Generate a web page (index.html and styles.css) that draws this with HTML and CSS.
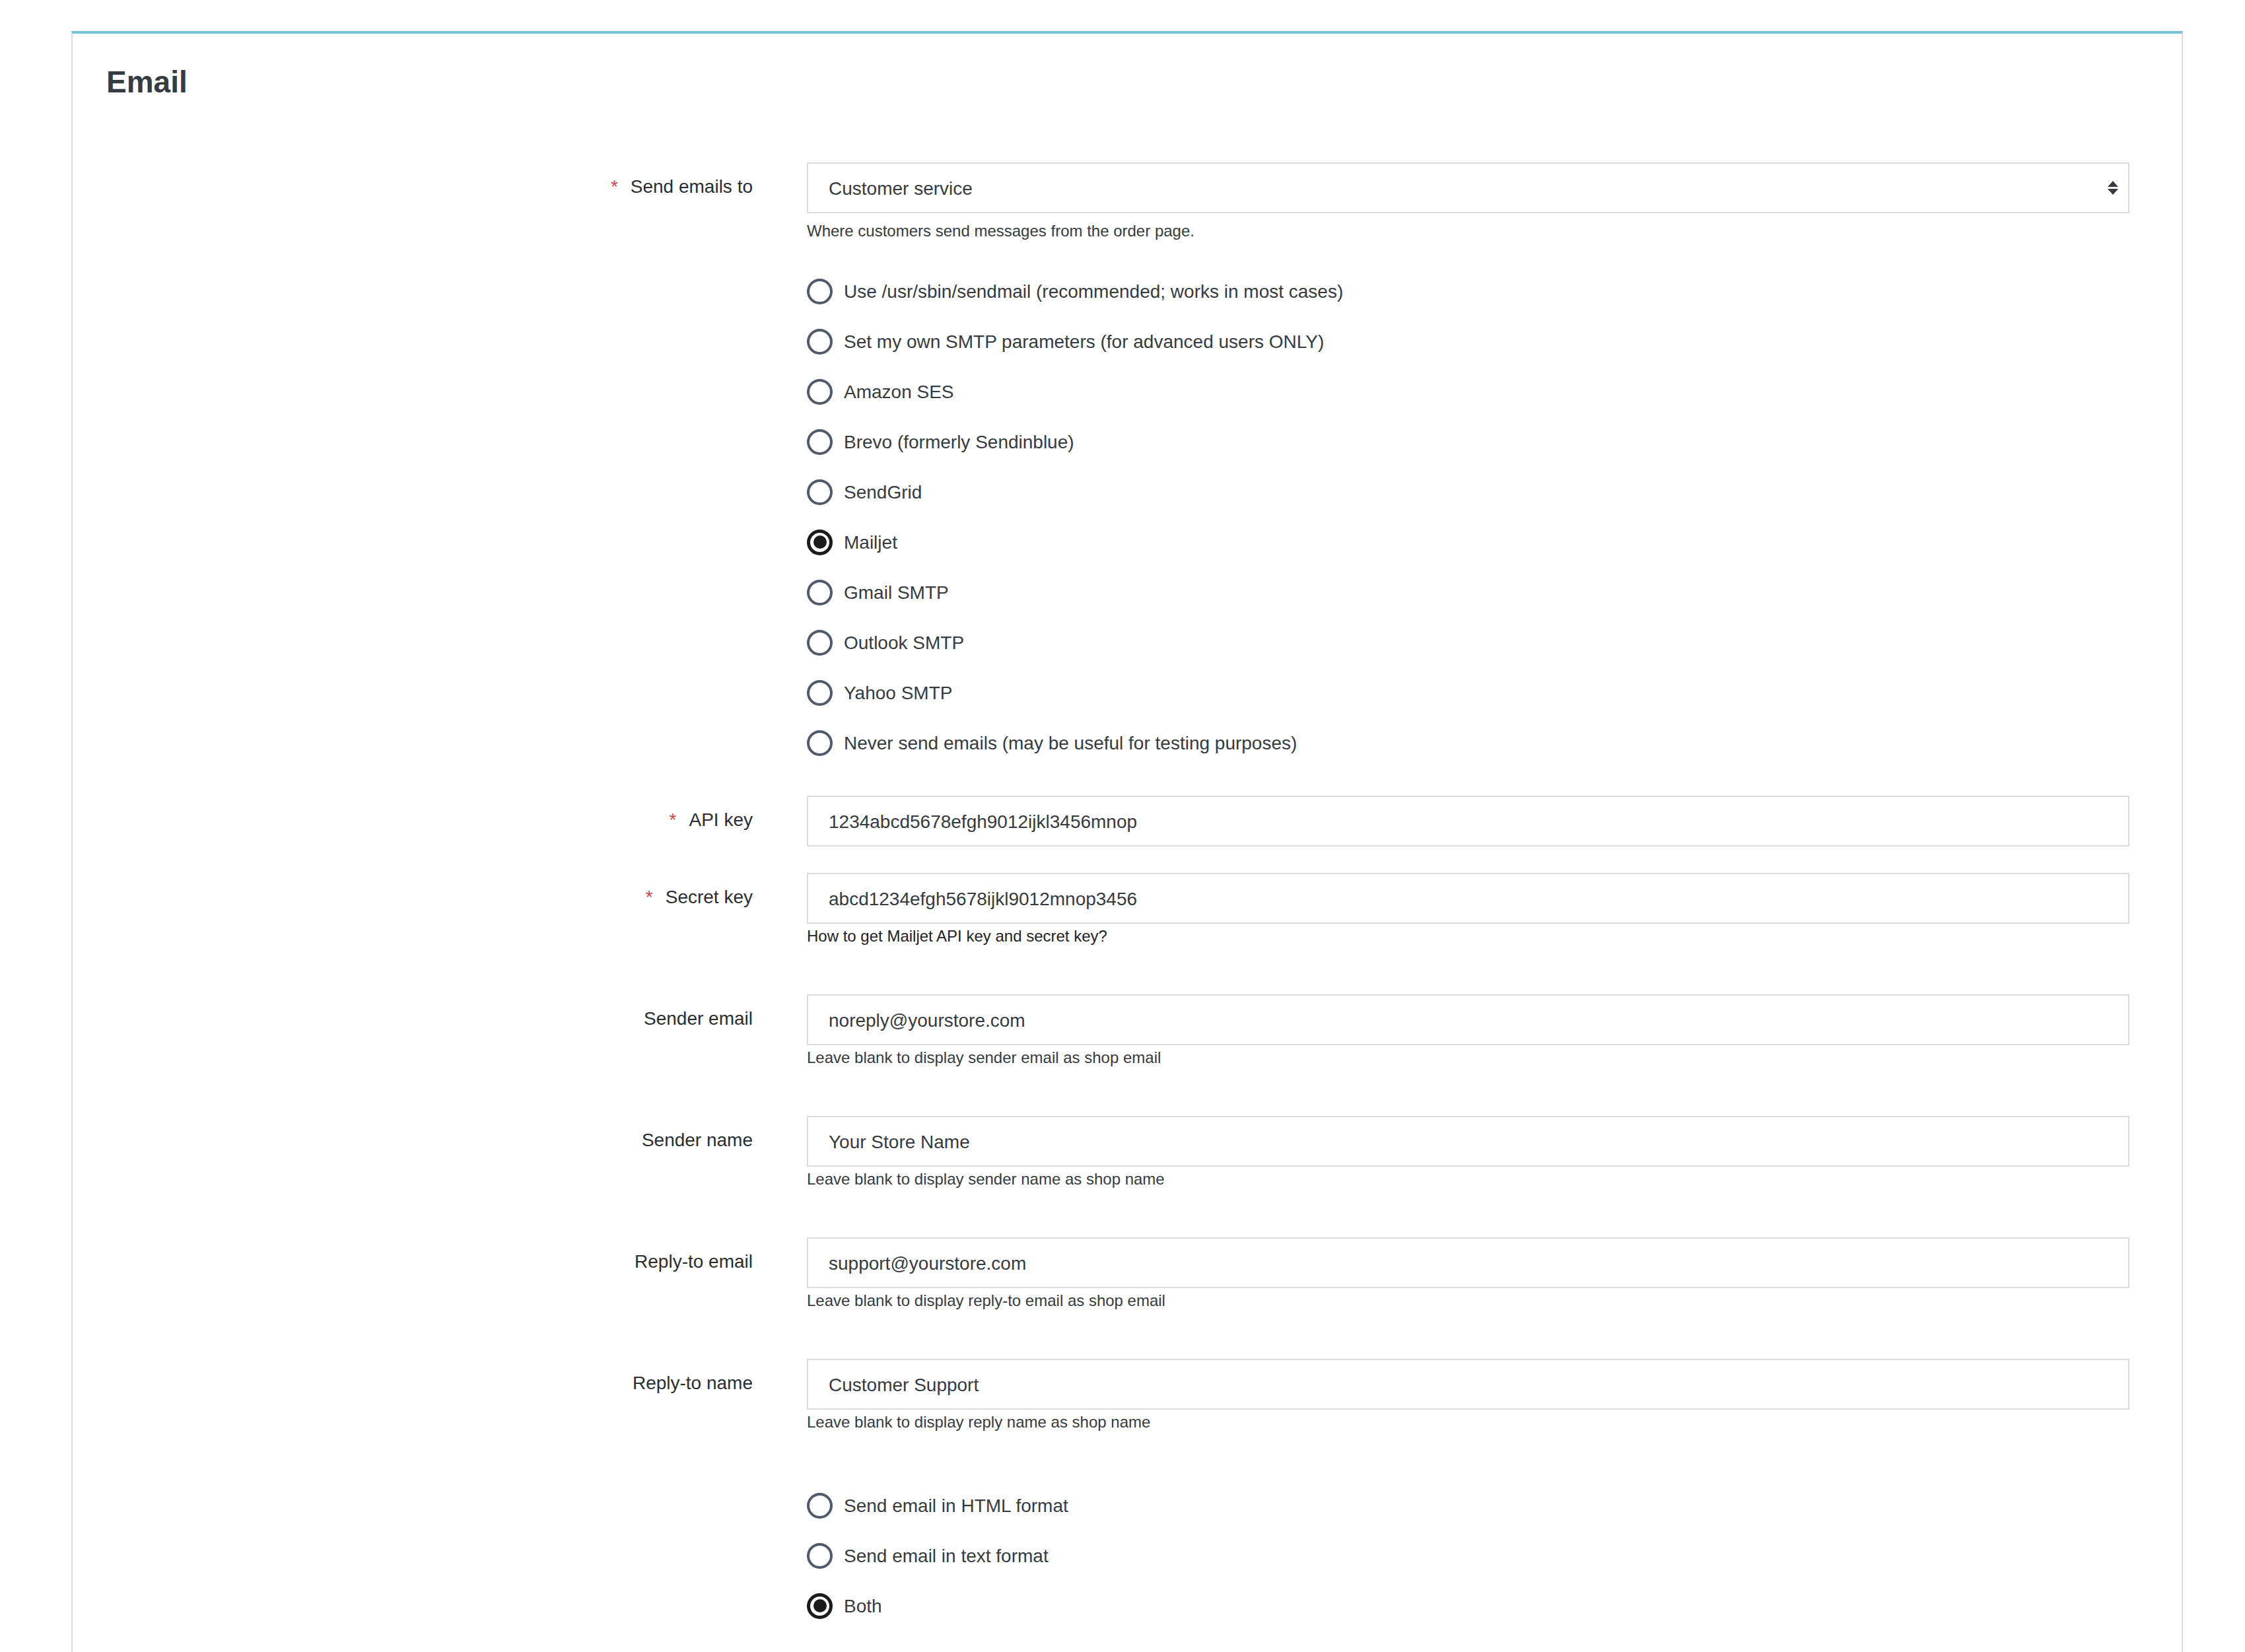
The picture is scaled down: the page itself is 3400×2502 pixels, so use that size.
FILE: index.html
```html
<!DOCTYPE html>
<html lang="en">
<head>
<meta charset="utf-8">
<title>Email</title>
<link rel="stylesheet" href="styles.css">
</head>
<body>
<div class="card">
  <h2 class="card-title">Email</h2>

  <div class="form-row row-select">
    <label class="row-label"><span class="required">*</span>Send emails to</label>
    <div class="row-control">
      <div class="select">
        <span class="select-value">Customer service</span>
        <svg class="select-arrow" width="16" height="22" viewBox="0 0 16 22"><polygon points="8,0 16,9 0,9"/><polygon points="0,12 16,12 8,21"/></svg>
      </div>
      <p class="help help-select">Where customers send messages from the order page.</p>
    </div>
  </div>

  <div class="form-row row-radios">
    <div class="row-label"></div>
    <div class="row-control">
      <div class="radio-item"><span class="radio"></span><span class="radio-text">Use /usr/sbin/sendmail (recommended; works in most cases)</span></div>
      <div class="radio-item"><span class="radio"></span><span class="radio-text">Set my own SMTP parameters (for advanced users ONLY)</span></div>
      <div class="radio-item"><span class="radio"></span><span class="radio-text">Amazon SES</span></div>
      <div class="radio-item"><span class="radio"></span><span class="radio-text">Brevo (formerly Sendinblue)</span></div>
      <div class="radio-item"><span class="radio"></span><span class="radio-text">SendGrid</span></div>
      <div class="radio-item"><span class="radio checked"></span><span class="radio-text">Mailjet</span></div>
      <div class="radio-item"><span class="radio"></span><span class="radio-text">Gmail SMTP</span></div>
      <div class="radio-item"><span class="radio"></span><span class="radio-text">Outlook SMTP</span></div>
      <div class="radio-item"><span class="radio"></span><span class="radio-text">Yahoo SMTP</span></div>
      <div class="radio-item"><span class="radio"></span><span class="radio-text">Never send emails (may be useful for testing purposes)</span></div>
    </div>
  </div>

  <div class="form-row">
    <label class="row-label"><span class="required">*</span>API key</label>
    <div class="row-control">
      <input class="text-input" type="text" value="1234abcd5678efgh9012ijkl3456mnop" readonly>
    </div>
  </div>

  <div class="form-row">
    <label class="row-label"><span class="required">*</span>Secret key</label>
    <div class="row-control">
      <input class="text-input" type="text" value="abcd1234efgh5678ijkl9012mnop3456" readonly>
      <p class="help help-dark">How to get Mailjet API key and secret key?</p>
    </div>
  </div>

  <div class="form-row">
    <label class="row-label">Sender email</label>
    <div class="row-control">
      <input class="text-input" type="text" value="noreply@yourstore.com" readonly>
      <p class="help">Leave blank to display sender email as shop email</p>
    </div>
  </div>

  <div class="form-row">
    <label class="row-label">Sender name</label>
    <div class="row-control">
      <input class="text-input" type="text" value="Your Store Name" readonly>
      <p class="help">Leave blank to display sender name as shop name</p>
    </div>
  </div>

  <div class="form-row">
    <label class="row-label">Reply-to email</label>
    <div class="row-control">
      <input class="text-input" type="text" value="support@yourstore.com" readonly>
      <p class="help">Leave blank to display reply-to email as shop email</p>
    </div>
  </div>

  <div class="form-row">
    <label class="row-label">Reply-to name</label>
    <div class="row-control">
      <input class="text-input" type="text" value="Customer Support" readonly>
      <p class="help">Leave blank to display reply name as shop name</p>
    </div>
  </div>

  <div class="form-row row-last">
    <div class="row-label"></div>
    <div class="row-control">
      <div class="radio-item"><span class="radio"></span><span class="radio-text">Send email in HTML format</span></div>
      <div class="radio-item"><span class="radio"></span><span class="radio-text">Send email in text format</span></div>
      <div class="radio-item"><span class="radio checked"></span><span class="radio-text">Both</span></div>
    </div>
  </div>
</div>
</body>
</html>
```

FILE: styles.css
```css
html, body {
  margin: 0;
  padding: 0;
  background: #ffffff;
}

body {
  font-family: "Liberation Sans", Arial, sans-serif;
  color: #363a41;
}

.card {
  margin: 47px 94px 0 108px;
  border-top: 4px solid #78c3d8;
  border-left: 2px solid #dcdcdc;
  border-right: 2px solid #dcdcdc;
  padding: 45px 79px 35px 51px;
}

.card-title {
  margin: 0 0 94px 0;
  font-size: 46px;
  line-height: 56px;
  font-weight: 700;
  color: #363a41;
}

.form-row {
  display: grid;
  grid-template-columns: 979px 1fr;
  column-gap: 82px;
  margin-bottom: 40px;
}

.row-select {
  margin-bottom: 37px;
}

.row-radios {
  margin-bottom: 42px;
}

.row-last {
  margin-bottom: 0;
}

.row-label {
  display: block;
  text-align: right;
  font-size: 28px;
  line-height: 40px;
  padding-top: 17px;
  color: #2a2d32;
}

.required {
  color: #c9484f;
  margin-right: 19px;
}

.row-control {
  min-width: 0;
}

.select {
  box-sizing: border-box;
  height: 77px;
  border: 2px solid #dcdcdc;
  background: #ffffff;
  display: flex;
  align-items: center;
  justify-content: space-between;
  padding: 0 15px 0 31px;
  font-size: 28px;
  color: #363a41;
}

.select-value {
  padding-top: 2px;
}

.select-arrow {
  fill: #363a41;
  flex: none;
}

.text-input {
  display: block;
  box-sizing: border-box;
  width: 100%;
  height: 77px;
  margin: 0;
  border: 2px solid #dcdcdc;
  border-radius: 0;
  background: #ffffff;
  padding: 2px 31px 0 31px;
  font-family: "Liberation Sans", Arial, sans-serif;
  font-size: 28px;
  color: #363a41;
  outline: none;
}

.help {
  margin: 3px 0 32px 0;
  font-size: 24px;
  line-height: 32px;
  color: #363a41;
}

.help-select {
  margin: 11px 0 0 0;
}

.help-dark {
  color: #1e2226;
}

.radio-item {
  display: flex;
  align-items: center;
  gap: 17px;
  height: 76px;
  font-size: 28px;
  line-height: 40px;
  color: #363a41;
}

.radio-text {
  padding-top: 2px;
}

.radio {
  box-sizing: border-box;
  flex: none;
  width: 39px;
  height: 39px;
  border: 4px solid #505a6b;
  border-radius: 50%;
  display: flex;
  align-items: center;
  justify-content: center;
}

.radio.checked {
  border: 5px solid #1b1b1b;
}

.radio.checked::after {
  content: "";
  width: 20px;
  height: 20px;
  border-radius: 50%;
  background: #1b1b1b;
}
```
